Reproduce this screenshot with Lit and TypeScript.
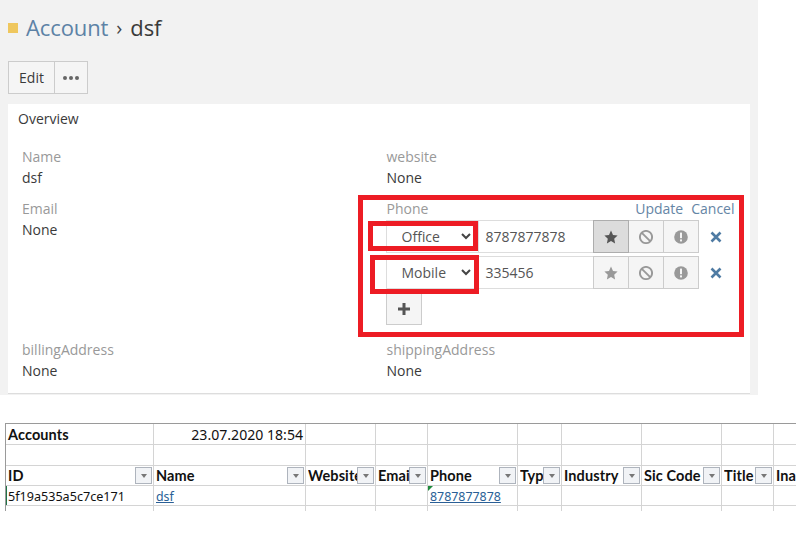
import { LitElement, html, css, svg } from "lit";
import { customElement } from "lit/decorators.js";

const star = svg`<path d="M7 .6l2 4.3 4.6.6-3.4 3.2.9 4.7L7 11.1l-4.1 2.3.9-4.7L.4 5.5 5 4.9z" fill="currentColor"/>`;
const ban = svg`<circle cx="7" cy="7" r="6.1" fill="none" stroke="currentColor" stroke-width="1.9"/><path d="M2.800 2.800l8.400 8.400" stroke="currentColor" stroke-width="1.9"/>`;
const excl = svg`<circle cx="7" cy="7" r="6.8" fill="currentColor"/><rect x="6" y="2.6" width="2" height="5.6" fill="#f5f5f5"/><rect x="6" y="9.4" width="2" height="2" fill="#f5f5f5"/>`;

@customElement("app-root")
export class AppRoot extends LitElement {
  static styles = css`
    :host { display: block; width: 796px; height: 544px; background: #fff; position: relative; overflow: hidden; font-family: "Open Sans", sans-serif; font-size: 14px; color: #3a3a3a; }
    .page { width: 758px; height: 395px; background: #f2f2f2; box-sizing: border-box; padding: 12px 8px 0; }
    .head { display: flex; align-items: center; height: 30px; font-size: 22px; letter-spacing: -0.1px; }
    .sq { width: 10px; height: 10px; background: #efc75e; margin-right: 8px; margin-top: 2px; }
    .head a { color: #5d82a6; }
    .sep { margin: 0 8px; font-size: 20px; color: #444; }
    .btns { display: flex; margin-top: 19px; height: 33px; }
    .btn { box-sizing: border-box; border: 1px solid #ccc; background: #f5f5f5; display: flex; align-items: center; justify-content: center; height: 33px; }
    .edit { width: 47px; }
    .more { width: 34px; margin-left: -1px; }
    .card { margin-top: 10px; width: 742px; height: 290px; background: #fff; box-sizing: border-box; border-bottom: 1px solid #ddd; padding: 4px 10px 0; }
    .title { line-height: 21px; }
    .grid { display: grid; grid-template-columns: 364.5px 1fr; padding: 17px 0 0 4px; }
    .field { line-height: 21px; min-height: 52px; }
    .label { color: #999; }
    .phone { height: 141px; width: 348px; }
    .phead { display: flex; justify-content: space-between; line-height: 21px; height: 22px; width: 348px; }
    .phead span span { color: #6585a5; margin-left: 8px; }
    .rows { margin-left: -1px; }
    .row { display: flex; height: 33px; margin-bottom: 3px; width: 348px; align-items: center; }
    .selw { position: relative; width: 92px; height: 33px; flex: none; }
    select { appearance: none; display: block; box-sizing: border-box; width: 92px; height: 33px; border: 1px solid #ddd; border-right: 0; border-radius: 0; background: #fff; font: 14px "Open Sans", sans-serif; color: #555; padding-left: 15px; outline: 0; }
    .chev { position: absolute; left: 75px; top: 13px; color: #444; display: block; }
    .inp { box-sizing: border-box; width: 116px; height: 33px; border: 1px solid #ddd; padding-left: 7px; line-height: 31px; color: #555; }
    .ic { width: 36px; margin-left: -1px; color: #999; }
    .ic svg { display: block; }
    .ic.on { background: #dcdcdc; border-color: #adadad; color: #555; position: relative; }
    .x { margin-left: 11px; color: #4f7ba3; display: block; }
    .plus { width: 36px; color: #555; }
    .anno { position: absolute; box-sizing: border-box; border: 5px solid #ed1c24; pointer-events: none; }
    .a1 { left: 358px; top: 195px; width: 386px; height: 142px; }
    .a2 { left: 368px; top: 221px; width: 110px; height: 30px; }
    .a3 { left: 370px; top: 255px; width: 109px; height: 39px; }
    .sheet { display: grid; grid-template-columns: 148px 152px 70px 52px 90px 44px 80px 80px 52px 30px; grid-template-rows: 21px 21px 20px 20px 20px; height: 87px; overflow: hidden; margin: 28px 0 0 5px; width: 791px; border-top: 1px solid #9a9a9a; border-left: 1px solid #9a9a9a; font-family: Lato, sans-serif; font-size: 14.5px; color: #111; }
    .c { box-sizing: border-box; border-right: 1px solid #d4d4d4; border-bottom: 1px solid #d4d4d4; padding: 0 2px; display: flex; align-items: center; overflow: hidden; white-space: nowrap; min-width: 0; position: relative; }
    .b { font-weight: 700; letter-spacing: .1px; }
    .b span { flex: 1; min-width: 0; overflow: hidden; }
    .date { justify-content: flex-end; font-family: "Noto Sans", sans-serif; font-size: 14.1px; }
    .mono { font-family: "Noto Sans", sans-serif; font-size: 12.6px; padding-top: 1px; }
    .lnkc { padding-top: 1px; }
    .lnk { color: #2a5f96; text-decoration: underline; font-family: "Noto Sans", sans-serif; font-size: 12.4px; }
    .f { flex: none; box-sizing: border-box; width: 17px; height: 17px; margin-right: -1px; border: 1px solid #aeb4bd; background: #f1f3f6; display: flex; align-items: center; justify-content: center; }
    .f i { border: 3.5px solid transparent; border-top: 4px solid #777; border-bottom: 0; display: block; }
    .sel { position: absolute; left: -1px; top: 0; width: 2px; height: 20px; background: #217346; }
    .tri { position: absolute; left: 0; top: 0; border-top: 5px solid #1f8a3c; border-right: 5px solid transparent; }
  `;

  private ic(inner: unknown, cls = "") {
    return html`<div class="btn ic ${cls}"><svg width="14" height="14" viewBox="0 0 14 14">${inner}</svg></div>`;
  }

  private phoneRow(type: string, num: string, on: boolean) {
    return html`<div class="row">
      <div class="selw">
        <select><option>${type}</option></select>
        <svg class="chev" width="10" height="7" viewBox="0 0 10 7"><path d="M1 1l4 4 4-4" fill="none" stroke="currentColor" stroke-width="2"/></svg>
      </div>
      <div class="inp">${num}</div>
      ${this.ic(star, on ? "on" : "")}${this.ic(ban)}${this.ic(excl)}
      <svg class="x" width="12" height="12" viewBox="0 0 12 12"><path d="M1.5 1.5l9 9M10.500 1.500l-9 9" stroke="currentColor" stroke-width="2.600"/></svg>
    </div>`;
  }

  private head(t: string) {
    return html`<div class="c b"><span>${t}</span><div class="f"><i></i></div></div>`;
  }

  render() {
    const empties = (n: number) => Array.from({ length: n }, () => html`<div class="c"></div>`);
    return html`
      <div class="page">
        <div class="head"><div class="sq"></div><a>Account</a><span class="sep">›</span><span>dsf</span></div>
        <div class="btns">
          <div class="btn edit">Edit</div>
          <div class="btn more"><svg width="16" height="4" viewBox="0 0 16 4"><g fill="#666"><circle cx="2" cy="2" r="2"/><circle cx="8" cy="2" r="2"/><circle cx="14" cy="2" r="2"/></g></svg></div>
        </div>
        <div class="card">
          <div class="title">Overview</div>
          <div class="grid">
            <div class="field"><div class="label">Name</div><div>dsf</div></div>
            <div class="field"><div class="label">website</div><div>None</div></div>
            <div class="field"><div class="label">Email</div><div>None</div></div>
            <div class="field phone">
              <div class="phead"><span class="label">Phone</span><span><span>Update</span><span>Cancel</span></span></div>
              <div class="rows">
                ${this.phoneRow("Office", "8787877878", true)}
                ${this.phoneRow("Mobile", "335456", false)}
                <div class="btn plus"><svg width="14" height="14" viewBox="0 0 14 14"><path d="M7 1v12M1 7h12" stroke="currentColor" stroke-width="3"/></svg></div>
              </div>
            </div>
            <div class="field"><div class="label">billingAddress</div><div>None</div></div>
            <div class="field"><div class="label">shippingAddress</div><div>None</div></div>
          </div>
        </div>
      </div>
      <div class="sheet">
        <div class="c b">Accounts</div><div class="c date">23.07.2020 18:54</div>${empties(8)}
        ${empties(10)}
        ${["ID", "Name", "Website", "Email", "Phone", "Type", "Industry", "Sic Code", "Title"].map((t) => this.head(t))}
        <div class="c b"><span>Inactive</span></div>
        <div class="c mono"><div class="sel"></div>5f19a535a5c7ce171</div>
        <div class="c lnkc"><span class="lnk">dsf</span></div>
        ${empties(2)}
        <div class="c lnkc"><div class="tri"></div><span class="lnk">8787877878</span></div>
        ${empties(5)}
        ${empties(10)}
      </div>
      <div class="anno a1"></div><div class="anno a2"></div><div class="anno a3"></div>
    `;
  }
}
